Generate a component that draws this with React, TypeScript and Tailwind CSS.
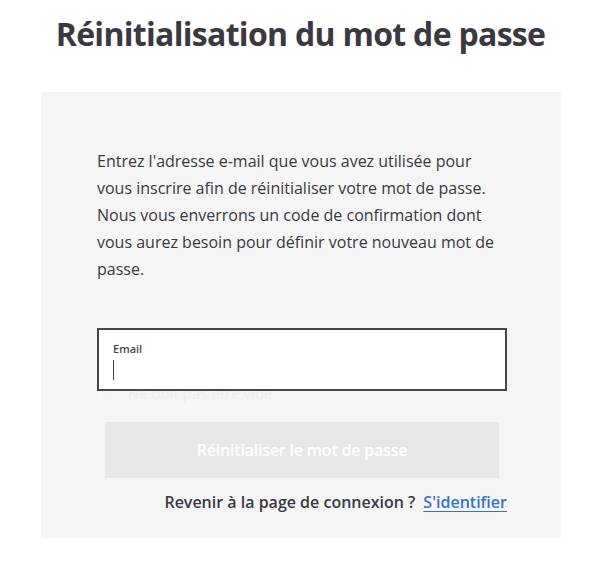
import React from 'react';

export default function App() {
  return (
    <div className="min-h-screen bg-white font-['Open_Sans',sans-serif] text-[#3a3942]">
      <h1 className="pl-[5px] pt-[14px] text-center text-[32px] font-bold leading-[40px] tracking-[-0.7px]">
        Réinitialisation du mot de passe
      </h1>

      <div className="mx-[41px] mt-[38px] h-[446px] w-[520px] bg-[#f5f5f5] px-[56px] pt-[56px]">
        <p className="text-[16px] font-medium leading-[27px]">
          Entrez l'adresse e-mail que vous avez utilisée pour vous inscrire afin de réinitialiser votre mot de
          passe. Nous vous enverrons un code de confirmation dont vous aurez besoin pour définir votre nouveau mot
          de passe.
        </p>

        <div className="relative mt-[45px]">
          <div className="absolute left-[4px] top-[54px] flex items-center gap-[14px] text-[15px] text-[#f1ede9]">
            <span className="text-[14px]">⚠</span>
            <span>Ne doit pas être vide</span>
          </div>
          <label className="relative block h-[63px] w-[410px] border-2 border-[#47464d] bg-white px-[14px] pt-[12px]">
            <span className="block text-[11px] font-semibold leading-[14px] text-[#47464d]">Email</span>
            <span className="mt-[4px] block h-[20px] w-px bg-[#3d3c45]" />
          </label>
        </div>

        <button
          type="button"
          className="ml-[8px] mt-[31px] flex h-[56px] w-[394px] items-center justify-center bg-[#e7e7e9] text-[16px] font-semibold tracking-[-0.2px] text-white"
        >
          Réinitialiser le mot de passe
        </button>

        <div className="mt-[14px] flex w-[410px] justify-end text-[16px] font-semibold leading-[20px]">
          <span>Revenir à la page de connexion ?</span>
          <a href="#" className="ml-[8px] text-[#3a72c5] underline underline-offset-[3px]">
            S'identifier
          </a>
        </div>
      </div>
    </div>
  );
}
